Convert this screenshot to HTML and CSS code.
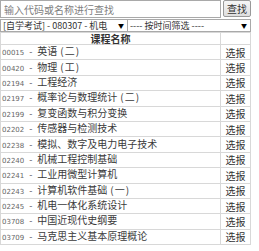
FILE: index.html
```html
<!DOCTYPE html>
<html lang="zh-CN">
<head>
  <meta charset="UTF-8" />
  <meta name="viewport" content="width=device-width, initial-scale=1.0"/>
  <title>课程查询</title>
  <link rel="stylesheet" href="styles.css">
</head>
<body>
  <div class="wrap">
    <div class="search">
      <input class="kw" placeholder="输入代码或名称进行查找" />
      <button class="find">查找</button>
    </div>
    <div class="filters">
      <div class="sel sel-major"><span>[自学考试] - 080307 - 机电</span><i>▼</i></div>
      <div class="sel sel-time"><span>---- 按时间筛选 ----</span><i>▼</i></div>
    </div>
    <table class="courses">
      <thead>
        <tr><th>课程名称</th><th></th></tr>
      </thead>
      <tbody id="list"></tbody>
    </table>
  </div>

  <script>
    const courses = [
      ['00015', '英语', '二'],
      ['00420', '物理', '工'],
      ['02194', '工程经济'],
      ['02197', '概率论与数理统计', '二'],
      ['02199', '复变函数与积分变换'],
      ['02202', '传感器与检测技术'],
      ['02238', '模拟、数字及电力电子技术'],
      ['02240', '机械工程控制基础'],
      ['02241', '工业用微型计算机'],
      ['02243', '计算机软件基础', '一'],
      ['02245', '机电一体化系统设计'],
      ['03708', '中国近现代史纲要'],
      ['03709', '马克思主义基本原理概论']
    ];

    const list = document.getElementById('list');
    courses.forEach(c => {
      const extra = c[2] ? `<span class="par">(${c[2]})</span>` : '';
      list.innerHTML += `
        <tr>
          <td class="name"><span class="code">${c[0]}</span><span class="dash">-</span>${c[1]}${extra}</td>
          <td class="act">选报</td>
        </tr>
      `;
    });
  </script>
</body>
</html>
```

FILE: styles.css
```css
* {
  box-sizing: border-box;
}
body {
  margin: 0;
  font-family: "Noto Sans CJK SC", sans-serif;
  color: #333;
  background: #fff;
}
.wrap {
  width: 251px;
}

.search {
  display: flex;
  gap: 2px;
  height: 18px;
}
.kw {
  flex: 1;
  min-width: 0;
  height: 18px;
  margin: 0;
  padding: 0 3px;
  border: 1px solid #a9a9a9;
  font-family: inherit;
  font-size: 10px;
}
.kw::placeholder {
  color: #808080;
}
.find {
  width: 28px;
  height: 17px;
  margin: 0;
  padding: 0;
  border: 1px solid #999;
  border-radius: 2px;
  background: linear-gradient(#f6f6f6, #dedede);
  font-family: inherit;
  font-size: 10px;
  color: #333;
}

.filters {
  display: flex;
  margin-top: 1px;
}
.sel {
  display: flex;
  align-items: center;
  height: 13px;
  border: 1px solid #a9a9a9;
  font-size: 9px;
  line-height: 11px;
  padding: 0 3px 0 2px;
  white-space: nowrap;
}
.sel span {
  flex: 1;
  overflow: hidden;
}
.sel i {
  font-style: normal;
  font-size: 6px;
  color: #000;
  margin-left: 2px;
}
.sel-major {
  width: 128px;
}
.sel-time {
  flex: 1;
  border-left: none;
}

.courses {
  width: 100%;
  border-collapse: collapse;
}
.courses th, .courses td {
  border: 1px solid #d8d8d8;
  padding: 0;
  line-height: 11px;
  white-space: nowrap;
}
.courses th {
  height: 12px;
  font-size: 10px;
  font-weight: bold;
  text-align: center;
}
.courses td {
  height: 15.4px;
}
.courses td.name {
  font-size: 10px;
  padding-left: 1px;
  color: #3a3a3a;
}
.code {
  font-family: "DejaVu Sans", sans-serif;
  font-size: 7px;
  color: #666;
}
.dash {
  display: inline-block;
  width: 13px;
  text-align: center;
  font-size: 9px;
  color: #555;
}
.par {
  margin-left: 3px;
  letter-spacing: 1px;
}
.courses td.act {
  width: 30px;
  font-size: 10px;
  text-align: center;
  color: #333;
}
```
